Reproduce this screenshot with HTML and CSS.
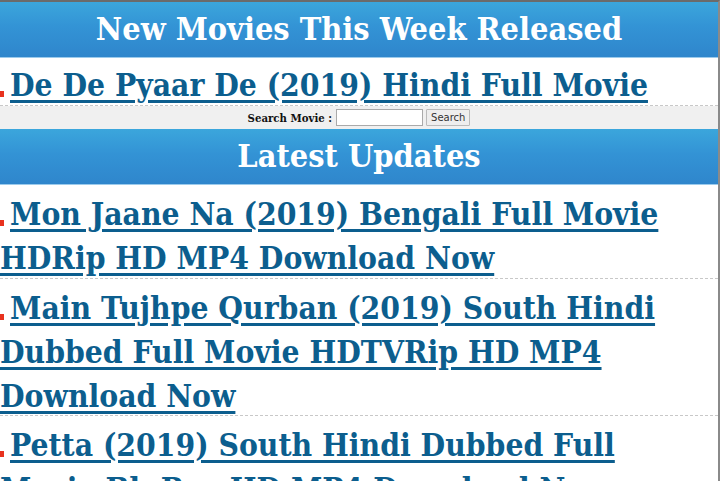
FILE: index.html
```html
<!DOCTYPE html>
<html>
<head>
<meta charset="utf-8">
<link rel="stylesheet" href="styles.css">
</head>
<body>
<div class="page">
  <div class="head">New Movies This Week Released</div>
  <div class="item short"><span class="dot"></span><a href="#">De De Pyaar De (2019) Hindi Full Movie</a></div>
  <form class="search">
    <label>Search Movie :</label>
    <input type="text" class="q">
    <button type="button" class="btn">Search</button>
  </form>
  <div class="head">Latest Updates</div>
  <div class="item first"><span class="dot"></span><a href="#">Mon Jaane Na (2019) Bengali Full Movie HDRip HD MP4 Download Now</a></div>
  <div class="item"><span class="dot"></span><a href="#">Main Tujhpe Qurban (2019) South Hindi Dubbed Full Movie HDTVRip HD MP4 Download Now</a></div>
  <div class="item"><span class="dot"></span><a href="#">Petta (2019) South Hindi Dubbed Full Movie BluRay HD MP4 Download Now</a></div>
</div>
</body>
</html>
```
FILE: styles.css
```css
html, body { margin: 0; padding: 0; background: #fff; }
body { font-family: "DejaVu Serif Condensed", "DejaVu Serif", serif; font-stretch: condensed; overflow: hidden; height: 481px; }
.page {
  width: 718px;
  border-top: 2px solid #6b6b6b;
  border-right: 2px solid #8a8a8a;
  min-height: 479px;
}
.head {
  height: 55px;
  line-height: 54px;
  text-align: center;
  color: #fff;
  font-weight: bold;
  font-size: 32.2px;
  background: linear-gradient(#3ba6dc, #3393d5 45%, #2f86cc);
  border-bottom: 1px solid #9ccbec;
}
.item {
  padding: 2px 20px 2px 0;
  font-size: 31.5px;
  line-height: 44px;
  font-weight: bold;
  border-bottom: 1px dashed #c8c8c8;
}
.item.short { padding-top: 0; padding-bottom: 3px; }
.item.first { padding-top: 2px; padding-bottom: 3px; }
.item a {
  color: #0c5e8e;
  text-decoration: underline;
  text-decoration-thickness: 3px;
  text-underline-offset: 4px;
  line-height: 30px;
  vertical-align: -5px;
}
.dot {
  display: inline-block;
  width: 4px;
  height: 6px;
  background: #e8321e;
  margin-right: 6px;
  vertical-align: -6px;
}
.search {
  margin: 0;
  background: #f0f0f0;
  height: 23px;
  display: flex;
  align-items: center;
  justify-content: center;
  gap: 3px;
  font-size: 11.3px;
  font-weight: bold;
  color: #111;
}
.q { width: 81px; height: 13px; border: 1px solid #aaa; padding: 1px 2px; margin: 0 0 0 1px; }
.btn {
  font-family: "DejaVu Sans", sans-serif;
  font-stretch: normal;
  font-size: 10px;
  height: 17px;
  padding: 0 4px;
  border: 1px solid #bbb;
  border-radius: 1px;
  background: #eee;
  color: #333;
  margin: 0;
}
```
